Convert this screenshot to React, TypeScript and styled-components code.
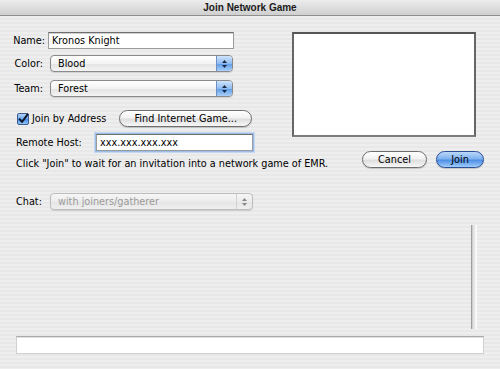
import React from "react";
import styled, { createGlobalStyle } from "styled-components";

const Global = createGlobalStyle`
  html, body { margin: 0; padding: 0; }
  body {
    width: 500px;
    height: 369px;
    overflow: hidden;
    font-family: "DejaVu Sans", "Noto Sans", sans-serif;
    font-size: 9.7px;
    color: #000;
  }
`;

const Window = styled.div`
  width: 500px;
  height: 369px;
  display: flex;
  flex-direction: column;
  background: repeating-linear-gradient(
    to bottom,
    #eeeeee 0px,
    #eeeeee 2px,
    #e8e8e8 2px,
    #e8e8e8 4px
  );
`;

const TitleBar = styled.div`
  height: 15px;
  border-bottom: 1px solid #8f8f8f;
  background: linear-gradient(to bottom, #ececec 0%, #dedede 50%, #cfcfcf 100%);
  display: flex;
  align-items: center;
  justify-content: center;
  font-family: "Liberation Sans", Arial, sans-serif;
  font-weight: bold;
  font-size: 10px;
  color: #1a1a1a;
`;

const Main = styled.div`
  flex: 1;
  display: flex;
  flex-direction: column;
  padding: 16px 16px 0 12px;
`;

const TopRow = styled.div`
  display: flex;
  justify-content: space-between;
  align-items: flex-start;
`;

const LeftForm = styled.div`
  width: 241px;
  display: flex;
  flex-direction: column;
`;

const Row = styled.div<{ $top?: number; $indent?: number }>`
  display: flex;
  align-items: center;
  margin-top: ${(p) => p.$top ?? 0}px;
  padding-left: ${(p) => p.$indent ?? 0}px;
`;

const Label = styled.div<{ $width: number; $right?: boolean }>`
  width: ${(p) => p.$width}px;
  flex: none;
  text-align: ${(p) => (p.$right ? "right" : "left")};
  white-space: nowrap;
`;

const TextField = styled.div<{ $width: number; $focus?: boolean; $ml?: number }>`
  width: ${(p) => p.$width}px;
  height: 15px;
  margin-left: ${(p) => p.$ml ?? 0}px;
  box-sizing: content-box;
  background: #fff;
  border: 1px solid #9a9a9a;
  border-top-color: #6f6f6f;
  box-shadow: ${(p) =>
    p.$focus
      ? "0 0 0 1px #9bbde8, 0 0 0 2px #c3d7f2"
      : "inset 0 1px 0 #cfcfcf"};
  display: flex;
  align-items: center;
  padding-left: 3px;
  white-space: nowrap;
`;

const Popup = styled.div<{ $width: number; $disabled?: boolean; $ml?: number }>`
  width: ${(p) => p.$width}px;
  height: 15px;
  margin-left: ${(p) => p.$ml ?? 0}px;
  border: 1px solid ${(p) => (p.$disabled ? "#bdbdbd" : "#8a8a8a")};
  border-radius: 4px;
  background: ${(p) =>
    p.$disabled
      ? "linear-gradient(to bottom, #f6f6f6, #ececec 50%, #e4e4e4 51%, #efefef)"
      : "linear-gradient(to bottom, #ffffff, #f3f3f3 50%, #e3e3e3 51%, #f4f4f4)"};
  display: flex;
  align-items: center;
  overflow: hidden;
  color: ${(p) => (p.$disabled ? "#9a9a9a" : "#000")};
  box-shadow: 0 1px 1px rgba(0, 0, 0, 0.12);
`;

const PopupText = styled.div`
  flex: 1;
  padding-left: 7px;
  white-space: nowrap;
`;

const PopupArrows = styled.div<{ $disabled?: boolean }>`
  width: 15px;
  height: 100%;
  flex: none;
  border-left: 1px solid ${(p) => (p.$disabled ? "#d0d0d0" : "#6f8fc4")};
  background: ${(p) =>
    p.$disabled
      ? "transparent"
      : "linear-gradient(to bottom, #cfe3fb, #8ebcf2 50%, #5d9ae6 51%, #a9d0fa)"};
  display: flex;
  align-items: center;
  justify-content: center;
`;

const Preview = styled.div`
  width: 180px;
  height: 101px;
  margin-right: 8px;
  background: #fff;
  border: 2px solid #666666;
  border-top-color: #555555;
  border-bottom-color: #7c7c7c;
`;

const CheckWrap = styled.label`
  display: flex;
  align-items: center;
  gap: 3px;
`;

const PushButton = styled.div<{ $width: number; $default?: boolean; $ml?: number }>`
  width: ${(p) => p.$width}px;
  height: 15px;
  margin-left: ${(p) => p.$ml ?? 0}px;
  box-sizing: content-box;
  border-radius: 9px;
  border: 1px solid ${(p) => (p.$default ? "#2b4f96" : "#6e6e6e")};
  background: ${(p) =>
    p.$default
      ? "linear-gradient(to bottom, #bcd8fa 0%, #7fb1ef 45%, #4e8fe6 55%, #9fcdfb 100%)"
      : "linear-gradient(to bottom, #ffffff 0%, #f2f2f2 45%, #dedede 55%, #f7f7f7 100%)"};
  box-shadow: 0 1px 1px rgba(0, 0, 0, 0.18);
  display: flex;
  align-items: center;
  justify-content: center;
  white-space: nowrap;
  color: #000;
`;

const HintRow = styled.div`
  display: flex;
  align-items: center;
  padding-left: 4px;
  height: 17px;
`;

const Hint = styled.div`
  flex: 1;
  white-space: nowrap;
  padding-top: 7px;
`;

const ButtonGroup = styled.div`
  display: flex;
  align-items: center;
`;

const LogArea = styled.div`
  margin-top: 15px;
  height: 104px;
  display: flex;
  justify-content: flex-end;
`;

const ScrollTrack = styled.div`
  width: 5px;
  height: 104px;
  margin-right: 7px;
  border-left: 1px solid #9d9d9d;
  background: linear-gradient(to right, #c9c9c9, #e6e6e6 40%, #ffffff 100%);
`;

const BottomField = styled.div`
  margin-top: 7px;
  margin-left: 4px;
  height: 16px;
  background: #fff;
  border: 1px solid #d0d0d0;
  border-top: 1px solid #a9a9a9;
  box-shadow: inset 0 1px 0 #e2e2e2;
`;

const Arrows = ({ disabled }: { disabled?: boolean }) => (
  <svg width="7" height="10" viewBox="0 0 7 10">
    <path d="M3.5 1 L6 4 L1 4 Z" fill={disabled ? "#8a8a8a" : "#1c2a44"} />
    <path d="M3.5 9 L6 6 L1 6 Z" fill={disabled ? "#8a8a8a" : "#1c2a44"} />
  </svg>
);

const CheckBox = () => (
  <svg width="12" height="12" viewBox="0 0 12 12">
    <defs>
      <linearGradient id="cb" x1="0" y1="0" x2="0" y2="1">
        <stop offset="0" stopColor="#b9d6fa" />
        <stop offset="0.5" stopColor="#6ea7ee" />
        <stop offset="0.51" stopColor="#3f86e4" />
        <stop offset="1" stopColor="#9bcbfa" />
      </linearGradient>
    </defs>
    <rect x="0.5" y="0.5" width="11" height="11" rx="1.5" fill="url(#cb)" stroke="#3b5a8e" />
    <path
      d="M2.6 6.2 L5 9 L10.6 1.4"
      fill="none"
      stroke="#0c1220"
      strokeWidth="1.9"
      strokeLinecap="round"
      strokeLinejoin="round"
    />
  </svg>
);

export default function App() {
  return (
    <>
      <Global />
      <Window>
        <TitleBar>Join Network Game</TitleBar>
        <Main>
          <TopRow>
            <LeftForm>
              <Row>
                <Label $width={33} $right>
                  Name:
                </Label>
                <TextField $width={181} $ml={3}>
                  Kronos Knight
                </TextField>
              </Row>
              <Row $top={6}>
                <Label $width={31} $right>
                  Color:
                </Label>
                <Popup $width={181} $ml={7}>
                  <PopupText>Blood</PopupText>
                  <PopupArrows>
                    <Arrows />
                  </PopupArrows>
                </Popup>
              </Row>
              <Row $top={8}>
                <Label $width={31} $right>
                  Team:
                </Label>
                <Popup $width={181} $ml={7}>
                  <PopupText>Forest</PopupText>
                  <PopupArrows>
                    <Arrows />
                  </PopupArrows>
                </Popup>
              </Row>
              <Row $top={13} $indent={5}>
                <CheckWrap>
                  <CheckBox />
                  Join by Address
                </CheckWrap>
                <PushButton $width={131} $ml={13}>
                  Find Internet Game...
                </PushButton>
              </Row>
              <Row $top={7} $indent={4}>
                <Label $width={80}>Remote Host:</Label>
                <TextField $width={152} $focus>
                  xxx.xxx.xxx.xxx
                </TextField>
              </Row>
            </LeftForm>
            <Preview />
          </TopRow>
          <HintRow>
            <Hint>Click "Join" to wait for an invitation into a network game of EMR.</Hint>
            <ButtonGroup>
              <PushButton $width={63}>Cancel</PushButton>
              <PushButton $width={46} $ml={9} $default>
                Join
              </PushButton>
            </ButtonGroup>
          </HintRow>
          <Row $top={25} $indent={4}>
            <Label $width={34}>Chat:</Label>
            <Popup $width={201} $disabled>
              <PopupText>with joiners/gatherer</PopupText>
              <PopupArrows $disabled>
                <Arrows disabled />
              </PopupArrows>
            </Popup>
          </Row>
          <LogArea>
            <ScrollTrack />
          </LogArea>
          <BottomField />
        </Main>
      </Window>
    </>
  );
}
